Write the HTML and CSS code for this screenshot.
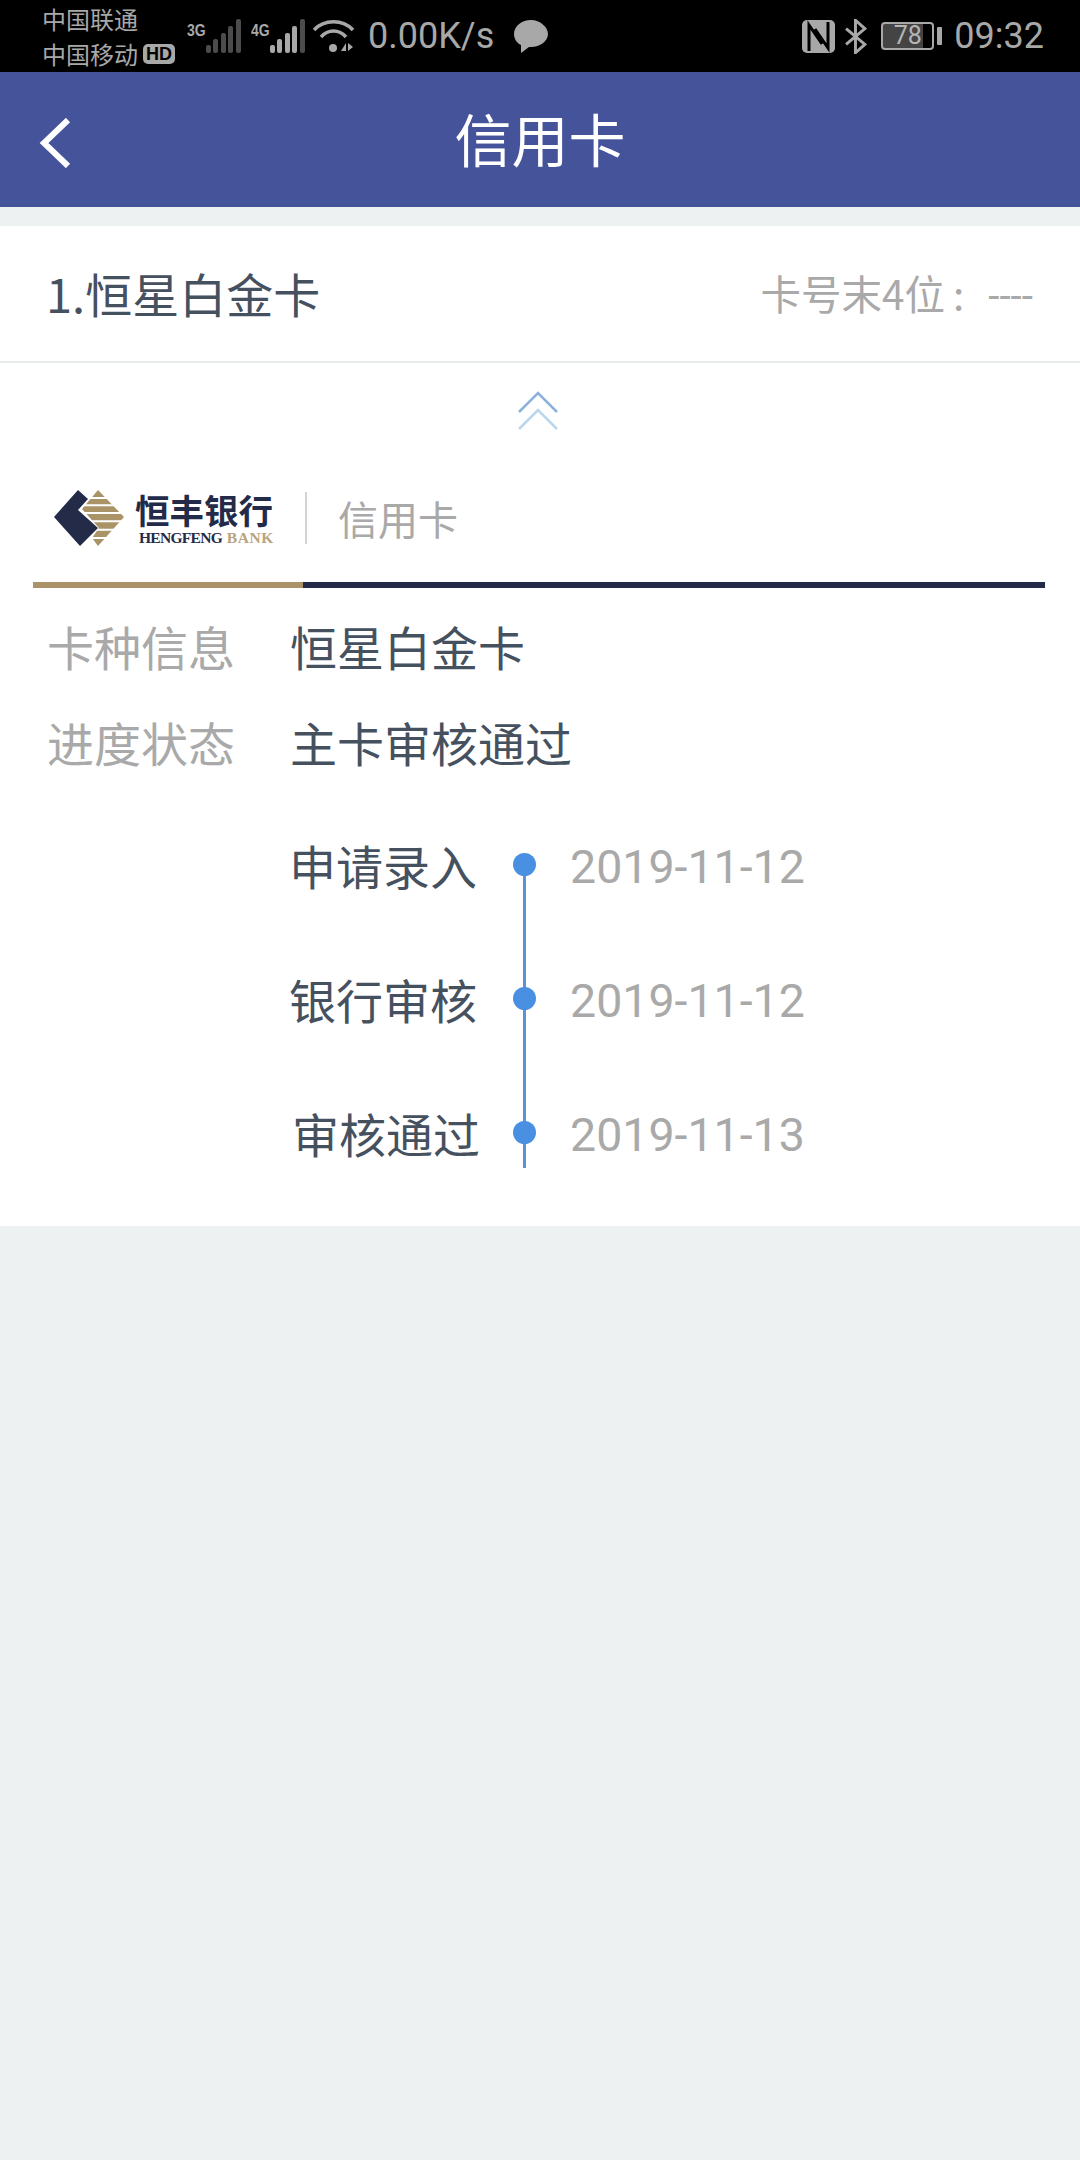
FILE: index.html
```html
<!DOCTYPE html>
<html lang="zh">
<head>
<meta charset="utf-8">
<title>信用卡</title>
<link rel="stylesheet" href="styles.css">
</head>
<body>
<div class="status">
  <div class="carriers">
    <div>中国联通</div>
    <div class="carrier2">中国移动<span class="hd">HD</span></div>
  </div>
  <div class="sig">
    <span class="net">3G</span>
    <svg width="38" height="34" viewBox="0 0 38 34"><g fill="#4c4c4c"><rect x="1" y="26" width="5" height="8" rx="2"/><rect x="8" y="20" width="5" height="14" rx="2"/><rect x="16" y="14" width="5" height="20" rx="2"/><rect x="23" y="7" width="5" height="27" rx="2"/><rect x="31" y="0" width="5" height="34" rx="2"/></g></svg>
  </div>
  <div class="sig">
    <span class="net">4G</span>
    <svg width="38" height="34" viewBox="0 0 38 34"><g fill="#a8a8a8"><rect x="1" y="26" width="5" height="8" rx="2"/><rect x="8" y="20" width="5" height="14" rx="2"/><rect x="16" y="14" width="5" height="20" rx="2"/><rect x="23" y="7" width="5" height="27" rx="2"/></g><rect x="31" y="0" width="5" height="34" rx="2" fill="#4c4c4c"/></svg>
  </div>
  <svg class="wifi" width="42" height="34" viewBox="0 0 42 34"><g fill="none" stroke="#a8a8a8" stroke-width="3.5"><path d="M1 11C11 0 30 0 40 11"/><path d="M8 18C15 10 26 10 33 18"/></g><circle cx="20" cy="29" r="4" fill="#a8a8a8"/><path d="M28 32l5-8v8zM35 24l5 4-5 4z" fill="#a8a8a8"/></svg>
  <span class="speed">0.00K/s</span>
  <svg class="msg" width="34" height="33" viewBox="0 0 34 33"><path d="M17 0C8 0 0 6 0 14c0 5 3 9 7 11l0 8 8-6 2 0c9 0 17-6 17-13S26 0 17 0z" fill="#a8a8a8"/></svg>
  <div class="right">
    <svg width="33" height="33" viewBox="0 0 33 33"><rect width="33" height="33" rx="5" fill="#a8a8a8"/><path d="M7 31V5L20 24M26 2V28L13 9" fill="none" stroke="#000" stroke-width="3"/></svg>
    <svg class="bt" width="22" height="35" viewBox="0 0 21 33"><path d="M1 9L19 24L10 32V1L19 9L1 24" fill="none" stroke="#a8a8a8" stroke-width="2.8"/></svg>
    <div class="battery"><div class="batt-body"><span class="batt-num">78</span></div><div class="batt-tip"></div></div>
    <span class="time">09:32</span>
  </div>
</div>

<header class="header">
  <svg class="back" width="34" height="50" viewBox="0 0 34 50"><path d="M30 2L6 25l24 23" fill="none" stroke="#fff" stroke-width="6"/></svg>
  <h1 class="title">信用卡</h1>
</header>

<main class="card">
  <div class="card-head">
    <span class="card-name">1.恒星白金卡</span>
    <span class="card-no">卡号末4位<span class="colon">:</span><span class="dashes">----</span></span>
  </div>
  <div class="fold">
    <svg width="40" height="40" viewBox="0 0 40 40"><path d="M1 21L20 2L39 21" fill="none" stroke="#8db2dc" stroke-width="2.5"/><path d="M1 38L20 19L39 38" fill="none" stroke="#b9d6ef" stroke-width="2.5"/></svg>
  </div>
  <div class="brand">
    <svg class="mark" width="72" height="60" viewBox="0 0 72 60">
      <path d="M46 2L72 29L46 58L40 50L47 40L30 21Z" fill="#ab9368"/>
      <g stroke="#fff" stroke-width="2"><path d="M20 10H72M20 17.3H72M20 25H72M20 33.3H72M20 41.7H72M20 50H72"/></g>
      <path d="M2 29L26 2L36 11L26 22L46 40L28 58Z" fill="#232b49"/>
    </svg>
    <div class="bank">
      <div class="bank-cn">恒丰银行</div>
      <div class="bank-en"><span class="bank-navy">HENGFENG</span><span class="bank-gold">BANK</span></div>
    </div>
    <div class="brand-sep"></div>
    <span class="brand-sub">信用卡</span>
  </div>
  <div class="rule"><div class="rule-gold"></div><div class="rule-navy"></div></div>
  <div class="info">
    <div class="info-row"><span class="info-key">卡种信息</span><span class="info-val">恒星白金卡</span></div>
    <div class="info-row"><span class="info-key">进度状态</span><span class="info-val">主卡审核通过</span></div>
  </div>
  <div class="timeline">
    <div class="step"><span class="step-name">申请录入</span><span class="node"><i class="dot"></i></span><span class="step-date">2019-11-12</span></div>
    <div class="step"><span class="step-name">银行审核</span><span class="node"><i class="dot"></i></span><span class="step-date">2019-11-12</span></div>
    <div class="step step-last"><span class="step-name">审核通过</span><span class="node"><i class="dot"></i></span><span class="step-date">2019-11-13</span></div>
  </div>
</main>
</body>
</html>
```

FILE: styles.css
```css
* { box-sizing: border-box; }
html, body { margin: 0; padding: 0; }
body {
  width: 1080px;
  height: 2160px;
  background: #edf1f2;
  font-family: "Noto Sans CJK SC", Roboto, sans-serif;
  overflow: hidden;
}
.status {
  height: 72px;
  background: #000;
  color: #a8a8a8;
  display: flex;
  align-items: center;
  padding: 0 36px 0 42px;
}
.carriers { width: 145px; font-size: 24px; line-height: 35px; white-space: nowrap; }
.carrier2 { display: flex; align-items: center; }
.hd {
  font: 700 18px/20px "Liberation Sans", sans-serif;
  background: #a8a8a8; color: #000; border-radius: 5px;
  padding: 0 3px; margin-left: 5px;
}
.sig { display: flex; align-items: flex-start; width: 64px; height: 34px; }
.net { font: 700 14px/16px "Liberation Sans", sans-serif; width: 18px; margin-top: 3px; transform: scaleY(1.15); flex: none; }
.wifi { margin-left: -2px; }
.speed { font: 400 36px/42px Roboto, sans-serif; margin-left: 13px; }
.msg { margin-left: 20px; }
.right { margin-left: auto; display: flex; align-items: center; }
.bt { margin-left: 10px; }
.battery { display: flex; align-items: center; margin-left: 14px; }
.batt-body {
  width: 53px; height: 28px; border: 2px solid #a8a8a8; border-radius: 4px;
  background: linear-gradient(90deg, #444 82%, transparent 82%);
  display: flex; align-items: center; justify-content: center;
}
.batt-num { font: 400 25px/24px Roboto, sans-serif; color: #b5b5b5; }
.batt-tip { width: 5px; height: 18px; background: #a8a8a8; margin-left: 3px; border-radius: 1px; }
.time { font: 400 36px/42px Roboto, sans-serif; margin-left: 12px; }

.header {
  height: 135px;
  background: #45539a;
  position: relative;
  display: flex;
  align-items: center;
  justify-content: center;
}
.back { position: absolute; left: 38px; top: 46px; }
.title { margin: 0 0 5px; font-size: 57px; line-height: 70px; font-weight: 400; color: #fff; }

.card { margin-top: 19px; height: 1000px; background: #fff; }
.card-head {
  height: 137px;
  padding: 0 47px 2px 46px;
  border-bottom: 2px solid #e6eaeb;
  display: flex;
  align-items: center;
  justify-content: space-between;
}
.card-name { font-size: 47px; color: #46515f; }
.card-no { font-size: 40.5px; color: #a9a9a9; }
.colon { margin: 0 24px 0 8px; }
.dashes { font-family: Roboto, sans-serif; }
.fold { height: 96px; display: flex; justify-content: center; align-items: center; padding-right: 5px; }
.brand { height: 80px; margin-top: 19px; padding-left: 52px; display: flex; align-items: center; }
.mark { flex: none; }
.bank { margin-left: 11px; width: 139px; }
.bank-cn { font-size: 34.5px; line-height: 36px; font-weight: 700; color: #232b49; white-space: nowrap; }
.bank-en { font: 700 15.5px/17px "Liberation Serif", serif; display: flex; justify-content: space-between; padding-left: 4px; white-space: nowrap; margin-top: 2px; }
.bank-navy { color: #232b49; letter-spacing: -.7px; }
.bank-gold { color: #b8a47f; letter-spacing: .6px; }
.brand-sep { width: 2px; height: 52px; background: #d4d4d4; margin-left: 31px; }
.brand-sub { font-size: 40px; color: #a9a9a9; margin-left: 31px; }
.rule { margin: 24px 35px 0 33px; height: 6px; display: flex; }
.rule-gold { width: 270px; background: #ab9368; }
.rule-navy { flex: 1; background: #232b49; }
.info { padding: 9px 0 0 47px; }
.info-row { height: 96px; display: flex; align-items: center; font-size: 47px; }
.info-key { width: 243px; color: #a9a9a9; }
.info-val { color: #46515f; }
.timeline { margin-top: 46px; }
.step { height: 134px; display: grid; grid-template-columns: 477px 95px auto; grid-template-rows: 134px; }
.step-name { font-size: 47px; line-height: 60px; color: #46515f; text-align: right; }
.step-last .step-name { margin-right: -3px; }
.step-date { font: 400 46.5px/64px Roboto, sans-serif; color: #a9a9a9; margin-left: -2px; }
.node { position: relative; display: flex; justify-content: center; }
.node::before { content: ""; position: absolute; left: 46px; top: 30px; bottom: -30px; width: 3px; background: #5b94d6; }
.step-last { height: 80px; grid-template-rows: 80px; }
.step-last .node::before { bottom: 15px; }
.dot { position: relative; display: block; width: 23px; height: 23px; border-radius: 50%; background: #4a90e2; margin-top: 18px; }
```
